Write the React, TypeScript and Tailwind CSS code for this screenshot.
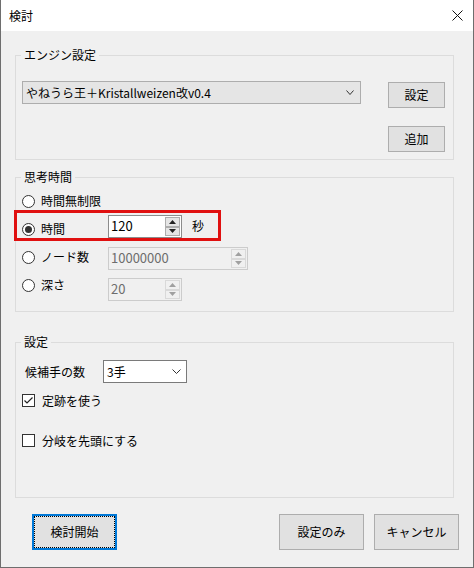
import React from "react";

const Chevron = ({ w = 8 }: { w?: number }) => (
  <svg width={w} height={5} viewBox={`0 0 ${w} 5`} fill="none">
    <path d={`M0.5 0.5 L${w / 2} ${4.5} L${w - 0.5} 0.5`} stroke="#333" strokeWidth="1" />
  </svg>
);

const Legend = ({ children }: { children: React.ReactNode }) => (
  <div className="-mt-[9px] ml-[5px] h-[16px] w-fit bg-[#f0f0f0] px-[3px] leading-[16px]">{children}</div>
);

const Radio = ({ checked, label }: { checked?: boolean; label: string }) => (
  <div className="flex h-[16px] items-center">
    <span className="flex h-[13px] w-[13px] items-center justify-center rounded-full border border-[#333333] bg-white">
      {checked && <span className="h-[7px] w-[7px] rounded-full bg-[#333333]" />}
    </span>
    <span className="ml-[6px] leading-[16px]">{label}</span>
  </div>
);

const Arrow = ({ up, disabled }: { up?: boolean; disabled?: boolean }) => (
  <div
    className={
      disabled
        ? "flex flex-1 items-center justify-center border border-[#d9d9d9] bg-[#f0f0f0]"
        : "flex flex-1 items-center justify-center border border-[#adadad] bg-[#e5e5e5]"
    }
  >
    <svg width="7" height="4" viewBox="0 0 7 4">
      <path d={up ? "M0 4 L3.5 0 L7 4 Z" : "M0 0 L3.5 4 L7 0 Z"} fill={disabled ? "#a0a0a0" : "#222"} />
    </svg>
  </div>
);

const SpinBox = ({ value, wide, disabled }: { value: string; wide?: boolean; disabled?: boolean }) => (
  <div
    className={`flex h-[23px] ${wide ? "w-[140px]" : "w-[74px]"} border ${
      disabled ? "border-[#cccccc] bg-[#f0f0f0] text-[#6d6d6d]" : "border-[#8c8c8c] bg-white text-black"
    }`}
  >
    <span className="flex-1 pl-[2px] text-[13px] leading-[20px]">{value}</span>
    <div className="my-[1px] mr-[1px] flex w-[15px] flex-col">
      <Arrow up disabled={disabled} />
      <Arrow disabled={disabled} />
    </div>
  </div>
);

const CheckBox = ({ checked, label }: { checked?: boolean; label: string }) => (
  <div className="flex h-[13px] items-center">
    <span className="ml-[6px] flex h-[13px] w-[13px] items-center justify-center border border-[#333333] bg-white">
      {checked && (
        <svg width="11" height="11" viewBox="0 0 11 11" fill="none">
          <path d="M1.5 5.5 L4 8 L9.5 2.5" stroke="#222" strokeWidth="1.2" />
        </svg>
      )}
    </span>
    <span className="ml-[7px] leading-[16px]">{label}</span>
  </div>
);

const Button = ({ children, primary }: { children: React.ReactNode; primary?: boolean }) => (
  <button
    className={
      primary
        ? "h-[36px] w-[85px] border-2 border-[#0078d7] bg-[#e1e1e1] outline-1 outline-offset-[-3px] outline-black outline-dotted"
        : "h-[36px] w-[85px] border border-[#adadad] bg-[#e1e1e1]"
    }
  >
    {children}
  </button>
);

export default function App() {
  return (
    <div className="flex h-[568px] w-[474px] flex-col overflow-hidden border-x border-b border-[#6e6e6e] bg-[#f0f0f0] font-['Noto_Sans_CJK_JP','Noto_Sans',sans-serif] text-[12px] text-black">
      <div className="flex h-[31px] shrink-0 items-center justify-between bg-white pl-[8px] pr-[10px]">
        <span>検討</span>
        <svg width="11" height="11" viewBox="0 0 11 11">
          <path d="M0.5 0.5 L10.5 10.5 M10.5 0.5 L0.5 10.5" stroke="#111" strokeWidth="1" />
        </svg>
      </div>

      {/* エンジン設定 */}
      <div className="mx-[14px] mt-[24px] h-[105px] w-[439px] shrink-0 border border-[#dcdcdc]">
        <Legend>エンジン設定</Legend>
        <div className="mt-[18px] flex items-start">
          <div className="ml-[6px] flex h-[23px] w-[339px] items-center justify-between border border-[#adadad] bg-[#e5e5e5] pl-[3px] pr-[6px]">
            <span className="leading-[16px]">やねうら王＋Kristallweizen改v0.4</span>
            <Chevron />
          </div>
          <div className="ml-[27px] flex flex-col">
            <button className="mt-[1px] h-[26px] w-[57px] border border-[#adadad] bg-[#e1e1e1]">設定</button>
            <button className="mt-[18px] h-[26px] w-[57px] border border-[#adadad] bg-[#e1e1e1]">追加</button>
          </div>
        </div>
      </div>

      {/* 思考時間 */}
      <div className="relative mx-[14px] mt-[17px] h-[135px] w-[439px] shrink-0 border border-[#dcdcdc]">
        <Legend>思考時間</Legend>
        <div className="ml-[6px] mt-[5px] flex h-[22px] items-center">
          <Radio label="時間無制限" />
        </div>
        <div className="ml-[6px] mt-[3px] flex h-[23px] items-start">
          <div className="mt-[6px] w-[86px]">
            <Radio checked label="時間" />
          </div>
          <SpinBox value="120" />
          <span className="ml-[10px] mt-[3px] leading-[16px]">秒</span>
        </div>
        <div className="ml-[6px] mt-[9px] flex h-[23px] items-start">
          <div className="mt-[2px] w-[86px]">
            <Radio label="ノード数" />
          </div>
          <SpinBox value="10000000" wide disabled />
        </div>
        <div className="ml-[6px] mt-[8px] flex h-[23px] items-start">
          <div className="-mt-[1px] w-[86px]">
            <Radio label="深さ" />
          </div>
          <SpinBox value="20" disabled />
        </div>
        <div className="absolute left-[-2px] top-[32px] h-[31px] w-[207px] border-[3px] border-[#e01010]" />
      </div>

      {/* 設定 */}
      <div className="mx-[14px] mt-[30px] h-[156px] w-[439px] shrink-0 border border-[#dcdcdc]">
        <Legend>設定</Legend>
        <div className="mt-[10px] flex h-[23px] items-center">
          <span className="ml-[9px] w-[78px] leading-[16px]">候補手の数</span>
          <div className="flex h-[23px] w-[84px] items-center justify-between border border-[#7a7a7a] bg-white pl-[3px] pr-[5px]">
            <span className="leading-[16px]">3手</span>
            <Chevron w={9} />
          </div>
        </div>
        <div className="mt-[11px]">
          <CheckBox checked label="定跡を使う" />
        </div>
        <div className="mt-[27px]">
          <CheckBox label="分岐を先頭にする" />
        </div>
      </div>

      <div className="mt-[16px] flex pl-[31px] pr-[14px]">
        <Button primary>検討開始</Button>
        <div className="ml-auto flex gap-[10px]">
          <Button>設定のみ</Button>
          <Button>キャンセル</Button>
        </div>
      </div>
    </div>
  );
}
